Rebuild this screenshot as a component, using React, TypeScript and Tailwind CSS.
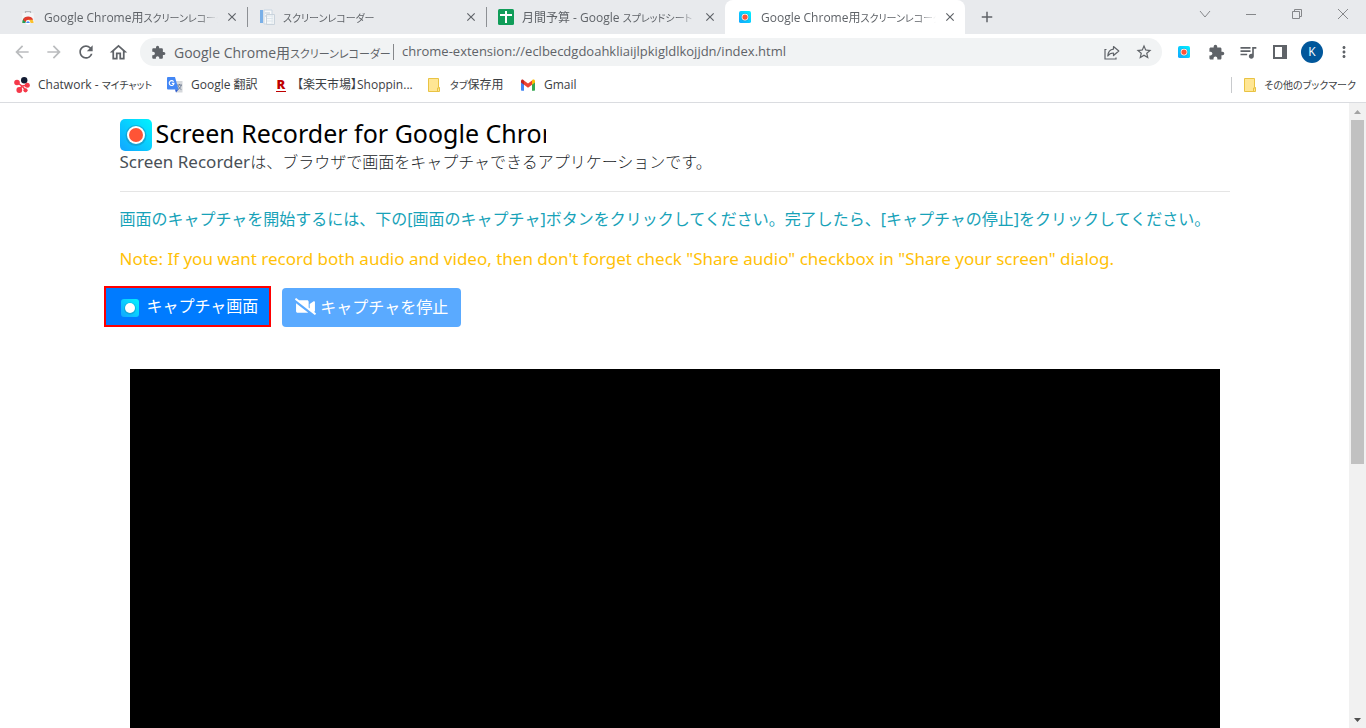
import type { ReactNode } from "react";
import { FaVideoSlash } from "react-icons/fa";
import {
  MdAdd,
  MdArrowBack,
  MdArrowForward,
  MdClose,
  MdExtension,
  MdMoreVert,
  MdOutlineHome,
  MdQueueMusic,
  MdRefresh,
  MdStarBorder,
} from "react-icons/md";

function RecorderIcon({ className = "" }: { className?: string }) {
  return (
    <svg viewBox="0 0 32 32" className={className} aria-hidden>
      <defs>
        <linearGradient id="recorder-bg" x1="0" y1="1" x2="1" y2="0">
          <stop offset="0" stopColor="#12a5ff" />
          <stop offset="1" stopColor="#00f4ff" />
        </linearGradient>
      </defs>
      <rect width="32" height="32" rx="5" fill="url(#recorder-bg)" />
      <circle cx="16" cy="16.5" r="10.5" fill="#1590b8" opacity="0.55" />
      <circle cx="16" cy="16" r="9" fill="#fff" />
      <circle cx="16" cy="16" r="7" fill="#ff5436" />
    </svg>
  );
}

function CaptureIcon() {
  return (
    <svg viewBox="0 0 18 18" className="mt-1 size-[18px]" aria-hidden>
      <defs>
        <linearGradient id="capture-bg" x1="0" y1="1" x2="1" y2="0">
          <stop offset="0" stopColor="#12a5ff" />
          <stop offset="1" stopColor="#00f4ff" />
        </linearGradient>
      </defs>
      <rect width="18" height="18" rx="3" fill="url(#capture-bg)" />
      <circle cx="9" cy="9.5" r="6" fill="#1590b8" opacity="0.5" />
      <circle cx="9" cy="9" r="5" fill="#fff" />
    </svg>
  );
}

function WebStoreIcon() {
  return (
    <svg viewBox="0 0 16 16" className="size-4" aria-hidden>
      <path d="M5.5 4.5V2.5h5v2" fill="none" stroke="#b5b7ba" strokeWidth="1.2" />
      <path d="M2.5 4h11l1 10h-13z" fill="#f4f5f6" />
      <path d="M2.400 14a5.600 5.600 0 0 1 11.200 0z" fill="#fbc02d" />
      <path d="M2.400 14a5.600 5.600 0 0 1 4.200-6L8 12.500 5.500 14z" fill="#1e9e58" />
      <path d="M3 10.800a5.600 5.600 0 0 1 10.200 0H8L5.600 13z" fill="#e23b2e" />
      <circle cx="8" cy="13.400" r="2.400" fill="#fff" />
      <path d="M6.200 14a1.800 1.800 0 0 1 3.600 0z" fill="#4285f4" />
    </svg>
  );
}

function DocsIcon() {
  return (
    <svg viewBox="0 0 16 16" className="size-4" aria-hidden>
      <rect x="1" y="1" width="3" height="13" fill="#7ab0e8" />
      <path d="M5 1h8v14H5z" fill="#fafafa" stroke="#c9d6e2" />
      <path d="M6 4h5M6 7h8M8 9.500h6M8 12h6" stroke="#b9cad8" />
      <path d="M7.500 5.500h8v10h-8z" fill="#f5f8fa" fillOpacity="0.6" stroke="#c9d3dc" />
    </svg>
  );
}

function SheetsIcon() {
  return (
    <svg viewBox="0 0 16 16" className="size-4" aria-hidden>
      <rect width="16" height="16" rx="1.500" fill="#109d59" />
      <path d="M7 2h2v3h5v2H9v7H7V7H2V5h5z" fill="#fff" />
    </svg>
  );
}

function ChatworkIcon() {
  return (
    <svg viewBox="0 0 16 16" className="size-4" aria-hidden>
      <g fill="#f5394a">
        <circle cx="3" cy="5.500" r="2.800" />
        <circle cx="13.300" cy="8.300" r="2.500" />
        <circle cx="5.300" cy="13" r="2.900" />
        <circle cx="11.500" cy="13.300" r="2.100" />
        <path d="M3 5.500 8 9l5-.7M8 9l-2.700 4M8 9l3.500 4" fill="none" stroke="#f5394a" strokeWidth="1.500" />
      </g>
      <circle cx="10.200" cy="3.300" r="3.200" fill="#131c33" />
    </svg>
  );
}

function TranslateIcon() {
  return (
    <svg viewBox="0 0 16 16" className="size-4" aria-hidden>
      <path d="M6 4h9.500v11.500H9z" fill="#d5d8dc" />
      <path d="M10 8h5M12.500 7v1m1.700 0c-.4 2-1.700 3.700-3.400 4.600M11 8.500c.6 1.800 1.800 3.200 3.400 4" stroke="#5f6f86" fill="none" strokeWidth="0.800" />
      <path d="M1 0h7l3.500 12.500H1a1 1 0 0 1-1-1V1a1 1 0 0 1 1-1z" fill="#4387f5" />
      <path d="m8 12.500 3.500 0L9 15.500z" fill="#2a5bd0" />
      <path d="M6.600 4.700A2.400 2.400 0 1 0 7 6.400H4.800" fill="none" stroke="#fff" strokeWidth="1.100" />
    </svg>
  );
}

function RakutenIcon() {
  return (
    <span className="flex size-4 flex-col items-center justify-center text-[#bf0000]" aria-hidden>
      <span className="font-['Open_Sans',sans-serif] text-[13px] leading-3 font-extrabold">R</span>
      <span className="mt-px h-px w-2.5 bg-[#bf0000]" />
    </span>
  );
}

function FolderIcon() {
  return (
    <svg viewBox="0 0 16 16" className="size-4" aria-hidden>
      <path d="M2.500 1.500h10v9h1v4h-11z" fill="#ffe694" stroke="#e9c343" />
      <path d="M11.500 14.500v-3.500h2" fill="none" stroke="#e9c343" />
    </svg>
  );
}

function GmailIcon() {
  return (
    <svg viewBox="0 0 16 16" className="size-4" aria-hidden>
      <path d="M1 4v9a.7.7 0 0 0 .7.7H4V6.500z" fill="#4285f4" />
      <path d="M15 4v9a.7.7 0 0 1-.7.7H12V6.500z" fill="#34a853" />
      <path d="M12 3.500v4.300l3-2.300V4c0-1.500-1.600-2-2.500-1.200z" fill="#fbbc04" />
      <path d="M4 7.800V3.400l4 3 4-3v4.400l-4 3z" fill="#ea4335" />
      <path d="M1 4v1.500l3 2.300V3.400l-.6-.5C2.400 2 1 2.700 1 4z" fill="#c5221f" />
    </svg>
  );
}

function ShareIcon() {
  return (
    <svg viewBox="0 0 18 18" className="size-[18px]" fill="none" stroke="#5f6368" strokeWidth="1.200" aria-hidden>
      <path d="M3.500 6.500h-1.500v9.500h11v-1.500" />
      <path d="M10.500 3.500 15.800 8l-5.300 4.500V10C7.500 10 6 11 4.800 13c.2-3.500 2-6.500 5.700-6.900z" strokeLinejoin="round" />
    </svg>
  );
}

type Tab = {
  title: ReactNode;
  icon: ReactNode;
  active?: boolean;
};

// Kana is set one or two sizes below the kanji and Latin beside it.
function Kana({ children, className = "text-[10px]" }: { children: string; className?: string }) {
  return <span className={className}>{children}</span>;
}

const TABS: Tab[] = [
  { title: <>Google Chrome用<Kana>スクリーンレコーダー</Kana></>, icon: <WebStoreIcon /> },
  { title: <Kana>スクリーンレコーダー</Kana>, icon: <DocsIcon /> },
  { title: <>月間予算 - Google <Kana>スプレッドシート</Kana></>, icon: <SheetsIcon /> },
  {
    title: <>Google Chrome用<Kana>スクリーンレコーダー</Kana></>,
    icon: <RecorderIcon className="size-3" />,
    active: true,
  },
];

const BOOKMARKS = [
  { label: <>Chatwork - <Kana>マイチャット</Kana></>, icon: <ChatworkIcon />, width: "w-[137px]" },
  { label: <>Google 翻訳</>, icon: <TranslateIcon />, width: "w-[90px]" },
  { label: <>【楽天市場】Shoppin...</>, icon: <RakutenIcon />, width: "w-[137px]" },
  { label: <><Kana>タブ</Kana>保存用</>, icon: <FolderIcon />, width: "w-[78px]" },
  { label: <>Gmail</>, icon: <GmailIcon />, width: "w-[56px]" },
];

function TabItem({ title, icon, active }: Tab) {
  return (
    <div
      className={
        "flex h-[34px] min-w-0 items-center pr-[7px] pl-3 " +
        (active ? "w-[240px] rounded-t-lg bg-white" : "w-[239px]")
      }
    >
      <span className="flex w-4 shrink-0 justify-center">{icon}</span>
      <span className="ml-2 flex-1 overflow-hidden mask-r-from-90% pt-0.5 whitespace-nowrap">{title}</span>
      <button type="button" aria-label="タブを閉じる" className="ml-1.5 flex size-4 items-center justify-center text-[#5f6368]">
        <MdClose size={14} />
      </button>
    </div>
  );
}

function TabStrip() {
  return (
    <div className="flex h-[34px] items-center bg-[#e8eaed] pl-2 text-[12px] text-[#5f6368] [font-feature-settings:'palt']">
      {TABS.map((tab, i) => (
        <div key={i} className="flex items-center">
          <TabItem {...tab} />
          {i < 2 && <span className="-mr-px h-5 w-px bg-[#8d9094]" />}
        </div>
      ))}
      <button type="button" aria-label="新しいタブ" className="ml-3 flex size-5 items-center justify-center">
        <MdAdd size={18} />
      </button>
      <div className="mb-1.5 ml-auto flex">
        <WindowButton label="タブを検索">
          <path d="m1 3 5 6 5-6" />
        </WindowButton>
        <WindowButton label="最小化">
          <path d="M1 6.500h10" />
        </WindowButton>
        <WindowButton label="元に戻す">
          <path d="M1.500 3.500h7v7h-7zM3.500 3.500v-2h7v7h-2" />
        </WindowButton>
        <WindowButton label="閉じる">
          <path d="m1 1 10 10M11 1 1 11" />
        </WindowButton>
      </div>
    </div>
  );
}

function WindowButton({ label, children }: { label: string; children: ReactNode }) {
  return (
    <button type="button" aria-label={label} className="flex h-7 w-[46px] items-center justify-center">
      <svg viewBox="0 0 12 12" className="size-3" fill="none" stroke="#85878a">
        {children}
      </svg>
    </button>
  );
}

function ToolButton({ label, children, className = "" }: { label: string; children: ReactNode; className?: string }) {
  return (
    <button type="button" aria-label={label} className={"flex h-7 w-8 shrink-0 items-center justify-center " + className}>
      {children}
    </button>
  );
}

function Toolbar() {
  return (
    <div className="flex h-9 items-center px-1.5 text-[#5f6368]">
      <ToolButton label="戻る" className="text-[#babcbe]"><MdArrowBack size={20} /></ToolButton>
      <ToolButton label="進む" className="text-[#babcbe]"><MdArrowForward size={20} /></ToolButton>
      <ToolButton label="再読み込み"><MdRefresh size={20} /></ToolButton>
      <ToolButton label="ホーム"><MdOutlineHome size={21} /></ToolButton>
      <div className="mx-1.5 flex h-7 min-w-0 flex-1 items-center rounded-full bg-[#f1f3f4] pr-0.5 pl-[11px]">
        <MdExtension size={15} className="shrink-0" />
        <span className="ml-2 w-[211px] shrink-0 text-[14px] whitespace-nowrap [font-feature-settings:'palt']">
          Google Chrome用<Kana className="text-[11px]">スクリーンレコーダー</Kana>
        </span>
        <span className="mx-2 h-4 w-px shrink-0 bg-[#85878a]" />
        <input
          type="text"
          aria-label="アドレス"
          defaultValue="chrome-extension://eclbecdgdoahkliaijlpkigldlkojjdn/index.html"
          className="min-w-0 flex-1 bg-transparent text-[13px] outline-none"
        />
        <ToolButton label="共有"><ShareIcon /></ToolButton>
        <ToolButton label="ブックマーク"><MdStarBorder size={18} /></ToolButton>
      </div>
      <ToolButton label="Screen Recorder"><RecorderIcon className="size-3" /></ToolButton>
      <ToolButton label="拡張機能"><MdExtension size={17} /></ToolButton>
      <ToolButton label="メディア"><MdQueueMusic size={20} /></ToolButton>
      <ToolButton label="サイドパネル">
        <svg viewBox="0 0 14 14" className="size-3.5" aria-hidden>
          <path d="M0 0h14v14H0zM2 2v10h7V2z" fill="#5f6368" fillRule="evenodd" />
        </svg>
      </ToolButton>
      <ToolButton label="プロフィール">
        <span className="flex size-[22px] items-center justify-center rounded-full bg-[#01579b] text-[12px] text-white">K</span>
      </ToolButton>
      <ToolButton label="メニュー"><MdMoreVert size={18} /></ToolButton>
    </div>
  );
}

function BookmarksBar() {
  return (
    <div className="flex h-[33px] items-center border-b border-[#dadce0] pr-2.5 pb-0.5 pl-3.5 text-[12px] text-[#3c4043] [font-feature-settings:'palt']">
      <nav className="flex gap-4">
        {BOOKMARKS.map((b, i) => (
          <a key={i} href="#" className={"flex items-center gap-2 whitespace-nowrap " + b.width}>
            <span className="shrink-0">{b.icon}</span>
            <span>{b.label}</span>
          </a>
        ))}
      </nav>
      <span className="ml-auto h-4 w-px bg-[#c8cacd]" />
      <a href="#" className="ml-2.5 flex items-center gap-1.5 whitespace-nowrap">
        <FolderIcon />
        <Kana>その他のブックマーク</Kana>
      </a>
    </div>
  );
}

function Scrollbar() {
  return (
    <div className="flex w-[17px] shrink-0 flex-col items-center bg-[#f1f1f1]" aria-hidden>
      <span className="flex h-[17px] items-center">
        <svg viewBox="0 0 7 4" className="h-1 w-[7px]"><path d="M0 4h7L3.500 0z" fill="#a3a3a3" /></svg>
      </span>
      <span className="h-[55%] w-[13px] bg-[#c1c1c1]" />
      <span className="mt-auto flex h-[17px] items-center">
        <svg viewBox="0 0 7 4" className="h-1 w-[7px]"><path d="M0 0h7L3.500 4z" fill="#505050" /></svg>
      </span>
    </div>
  );
}

function RecorderPage() {
  return (
    <main className="flex min-w-0 flex-1 flex-col overflow-hidden px-4 pt-4 font-['Noto_Sans','Noto_Sans_CJK_JP',sans-serif] text-[16px] leading-6">
      <div className="mx-auto flex w-full max-w-[1110px] flex-1 flex-col">
        <div className="flex h-8 gap-1">
          <RecorderIcon className="size-8 shrink-0" />
          <h1 className="w-[390px] overflow-hidden text-[25px] leading-7 whitespace-nowrap text-black">
            Screen Recorder for Google Chrome
          </h1>
        </div>
        <p className="leading-[22px] font-light text-[#212529]">
          <span className="text-[17px] font-normal text-[#495057]">Screen Recorder</span>
          は、ブラウザで画面をキャプチャできるアプリケーションです。
        </p>
        <hr className="mt-[18px] border-[#e5e5e5]" />
        <p className="mt-[15px] whitespace-nowrap text-[#17a2b8]">
          画面のキャプチャを開始するには、下の[画面のキャプチャ]ボタンをクリックしてください。完了したら、[キャプチャの停止]をクリックしてください。
        </p>
        <p className="mt-4 text-[17px] whitespace-nowrap text-[#ffc107]">
          Note: If you want record both audio and video, then don't forget check "Share audio" checkbox in "Share your screen" dialog.
        </p>
        <div className="-ml-4 flex items-end gap-[11px] pt-[15px] text-white">
          <button
            type="button"
            className="flex h-[41px] items-center gap-2 border-2 border-[#f00] bg-[#007bff] pr-[11px] pb-0.5 pl-[15px]"
          >
            <CaptureIcon />
            キャプチャ画面
          </button>
          <button type="button" disabled className="flex h-[39px] items-center gap-1 rounded bg-[#5aaaff] px-[13px] pb-0.5">
            <FaVideoSlash size={21} />
            キャプチャを停止
          </button>
        </div>
        <div className="mx-2.5 mt-[42px] flex-1 bg-black" />
      </div>
    </main>
  );
}

export default function App() {
  return (
    <div className="flex h-screen flex-col overflow-hidden bg-white font-['Open_Sans','Noto_Sans_CJK_JP',sans-serif]">
      <TabStrip />
      <Toolbar />
      <BookmarksBar />
      <div className="flex min-h-0 flex-1">
        <RecorderPage />
        <Scrollbar />
      </div>
    </div>
  );
}
